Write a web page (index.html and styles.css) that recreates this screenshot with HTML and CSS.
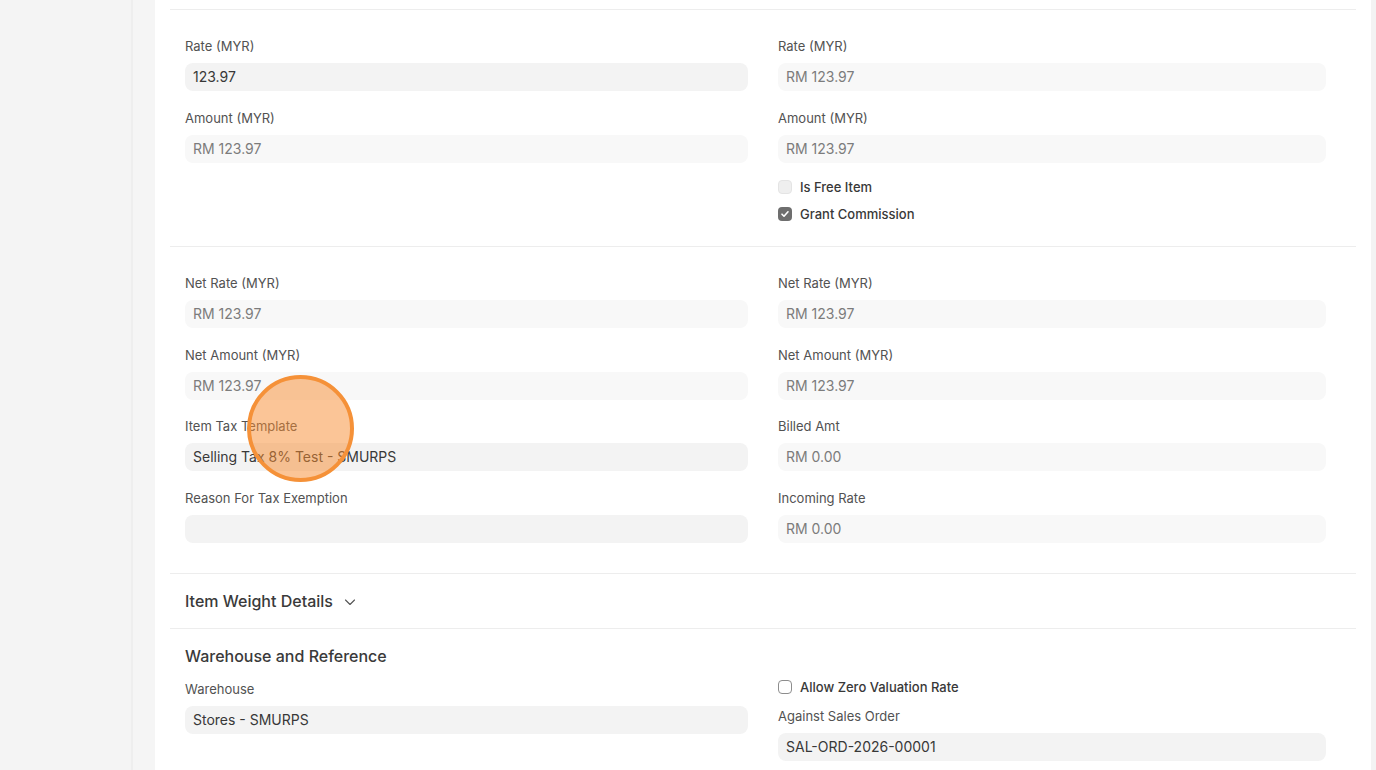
FILE: index.html
```html
<!DOCTYPE html>
<html lang="en">
<head>
    <meta charset="UTF-8">
    <meta name="viewport" content="width=device-width, initial-scale=1.0">
    <title>Sales Invoice Item</title>
    <link rel="stylesheet" href="styles.css">
</head>
<body>
    <div class="layout">
        <div class="sidebar"></div>
        <div class="gutter"></div>

        <div class="page">
            <!-- tail of the section above, scrolled off -->
            <div class="section section-prev"></div>

            <!-- Rate / Amount -->
            <div class="section">
                <div class="section-body short">
                    <div class="column">
                        <div class="field">
                            <label class="field-label">Rate (MYR)</label>
                            <div class="input">123.97</div>
                        </div>
                        <div class="field">
                            <label class="field-label">Amount (MYR)</label>
                            <div class="input read-only">RM 123.97</div>
                        </div>
                    </div>
                    <div class="column">
                        <div class="field">
                            <label class="field-label">Rate (MYR)</label>
                            <div class="input read-only">RM 123.97</div>
                        </div>
                        <div class="field">
                            <label class="field-label">Amount (MYR)</label>
                            <div class="input read-only">RM 123.97</div>
                        </div>
                        <div class="check-row">
                            <span class="checkbox disabled"></span>
                            <span>Is Free Item</span>
                        </div>
                        <div class="check-row">
                            <span class="checkbox checked">
                                <svg viewBox="0 0 14 14" width="14" height="14"><path d="M4 7.2l2 2 4-4.4" fill="none" stroke="#fff" stroke-width="1.6" stroke-linecap="round" stroke-linejoin="round"/></svg>
                            </span>
                            <span>Grant Commission</span>
                        </div>
                    </div>
                </div>
            </div>

            <!-- Net values -->
            <div class="section">
                <div class="section-body">
                    <div class="column">
                        <div class="field">
                            <label class="field-label">Net Rate (MYR)</label>
                            <div class="input read-only">RM 123.97</div>
                        </div>
                        <div class="field">
                            <label class="field-label">Net Amount (MYR)</label>
                            <div class="input read-only">RM 123.97</div>
                        </div>
                        <div class="field">
                            <label class="field-label">Item Tax Template</label>
                            <div class="input">Selling Tax 8% Test - SMURPS</div>
                        </div>
                        <div class="field">
                            <label class="field-label">Reason For Tax Exemption</label>
                            <div class="input"></div>
                        </div>
                    </div>
                    <div class="column">
                        <div class="field">
                            <label class="field-label">Net Rate (MYR)</label>
                            <div class="input read-only">RM 123.97</div>
                        </div>
                        <div class="field">
                            <label class="field-label">Net Amount (MYR)</label>
                            <div class="input read-only">RM 123.97</div>
                        </div>
                        <div class="field">
                            <label class="field-label">Billed Amt</label>
                            <div class="input read-only">RM 0.00</div>
                        </div>
                        <div class="field">
                            <label class="field-label">Incoming Rate</label>
                            <div class="input read-only">RM 0.00</div>
                        </div>
                    </div>
                </div>
            </div>

            <!-- Collapsed section -->
            <div class="section collapsed">
                <div class="section-head">
                    Item Weight Details
                    <svg class="chevron" viewBox="0 0 14 14" width="14" height="14"><path d="M2.5 5l4.5 4.5 4.5-4.5" fill="none" stroke="#555" stroke-width="1.1" stroke-linecap="round" stroke-linejoin="round"/></svg>
                </div>
            </div>

            <!-- Warehouse -->
            <div class="section last">
                <div class="section-title">Warehouse and Reference</div>
                <div class="section-body">
                    <div class="column">
                        <div class="field">
                            <label class="field-label">Warehouse</label>
                            <div class="input">Stores - SMURPS</div>
                        </div>
                    </div>
                    <div class="column">
                        <div class="check-row">
                            <span class="checkbox"></span>
                            <span>Allow Zero Valuation Rate</span>
                        </div>
                        <div class="field">
                            <label class="field-label">Against Sales Order</label>
                            <div class="input">SAL-ORD-2026-00001</div>
                        </div>
                    </div>
                </div>
            </div>

            <!-- click marker -->
            <div class="click-marker"></div>
        </div>

        <div class="rail"></div>
    </div>
</body>
</html>
```

FILE: styles.css
```css
body {
    margin: 0;
    padding: 0;
    font-family: 'Inter', 'Noto Sans', sans-serif;
    background: #f3f3f3;
    color: #383838;
    overflow: hidden;
    height: 100vh;
}

.layout {
    display: flex;
    height: 100vh;
}

.sidebar {
    width: 131px;
    border-right: 2px solid #eeeeee;
    background: #f4f4f4;
}

.gutter {
    width: 22px;
    background: #f5f5f5;
}

.page {
    position: relative;
    flex: 1;
    background: #fff;
    padding: 0 15px;
}

.rail {
    width: 5px;
    background: #f3f3f3;
}

.section {
    border-bottom: 1px solid #ededed;
}

.section-prev {
    height: 9px;
}

.section-body {
    display: grid;
    grid-template-columns: 563px 548px;
    column-gap: 30px;
    padding: 27px 15px 13px;
}

.section-body.short {
    padding-bottom: 12px;
}

.field {
    margin-bottom: 17.5px;
}

.field-label {
    display: block;
    font-size: 13px;
    line-height: 18px;
    color: #525252;
    margin-bottom: 8px;
}

.input {
    height: 28px;
    line-height: 28px;
    padding: 0 8px;
    border-radius: 8px;
    background: #f3f3f3;
    font-size: 14px;
    color: #383838;
    white-space: nowrap;
}

.input.read-only {
    background: #f8f8f8;
    color: #7c7c7c;
}

.check-row {
    display: flex;
    align-items: center;
    gap: 8px;
    height: 18px;
    margin: -2px 0 11px;
    font-size: 13px;
    font-weight: 500;
    color: #383838;
}

.checkbox {
    box-sizing: border-box;
    width: 14px;
    height: 14px;
    border-radius: 4px;
    border: 1px solid #8d8d8d;
    background: #fff;
    display: flex;
}

.checkbox.disabled {
    border-color: #e4e4e4;
    background: #efefef;
}

.checkbox.checked {
    border: none;
    background: #6e6e6e;
}

.section.collapsed {
    height: 54px;
}

.section-head {
    display: flex;
    align-items: center;
    height: 54px;
    padding: 0 15px;
    font-size: 16px;
    font-weight: 500;
    color: #3a3a3a;
}

.chevron {
    margin-left: 10px;
    margin-top: 2px;
}

.section-title {
    padding: 15px 15px 0;
    font-size: 16px;
    line-height: 24px;
    font-weight: 500;
    color: #3a3a3a;
}

.section.last {
    border-bottom: none;
}

.section.last .section-body {
    padding-top: 12px;
}

.click-marker {
    position: absolute;
    left: 92px;
    top: 375px;
    width: 99px;
    height: 99px;
    border-radius: 50%;
    border: 4px solid #f59138;
    background: rgba(248, 140, 48, 0.5);
}
```
